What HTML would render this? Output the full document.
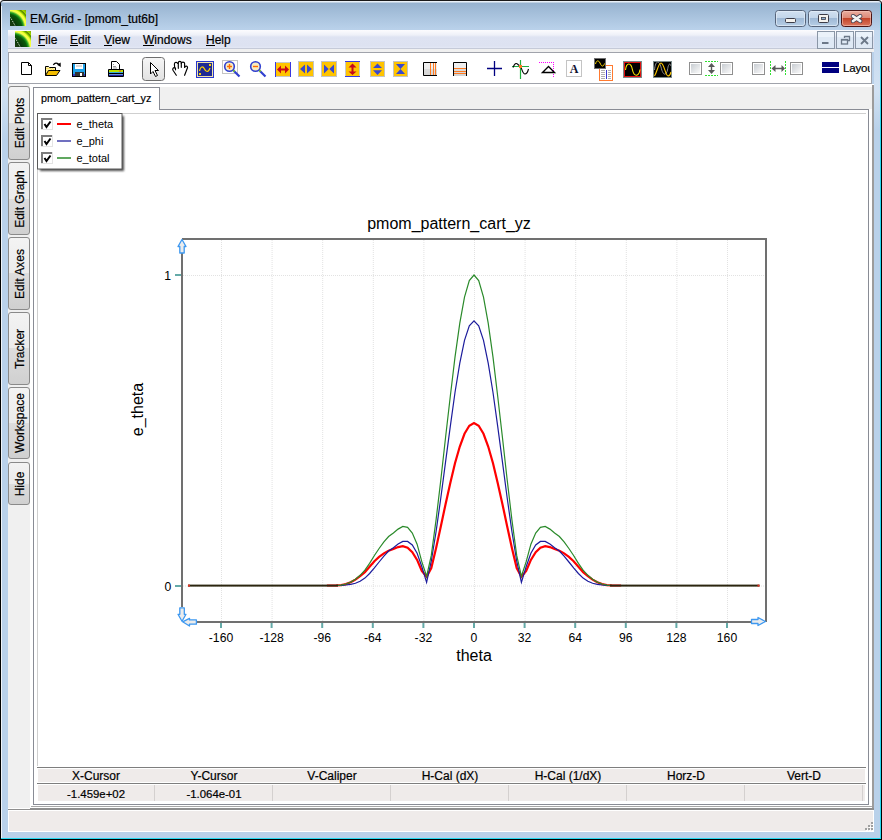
<!DOCTYPE html>
<html><head><meta charset="utf-8">
<style>
*{margin:0;padding:0;box-sizing:border-box}
html,body{width:882px;height:840px;overflow:hidden;background:#fff}
body{position:relative;font-family:"Liberation Sans",sans-serif;font-size:12px;color:#000;-webkit-text-stroke:0.2px #000}
.a{position:absolute}
#frame{left:0;top:0;width:882px;height:840px;background:#b9d1ea;border:1px solid #000;border-top-color:#1a1a1a;border-radius:4px 4px 0 0}
#titlegrad{left:1px;top:1px;width:880px;height:29px;background:linear-gradient(#e9f0f7 0px,#e9f0f7 1px,#97b3d0 2px,#a7c1dc 14px,#b9d1ea 28px);border-radius:4px 4px 0 0}
#menubar{left:8px;top:30px;width:866px;height:19px;background:linear-gradient(#fcfcfe 0px,#eef0f8 5px,#dee3f2 7px,#dde2f1 16px,#e4e8f5 18px);border-bottom:1px solid #c5cad8}
#gap{left:8px;top:49px;width:866px;height:3px;background:#f0f0f0}
#toolbar{left:8px;top:52px;width:864px;height:32px;background:#fff;border:1px solid #a0a3ab}
#content{left:8px;top:84px;width:866px;height:727px;background:#fff}
#sidepanel{left:8px;top:84px;width:22px;height:725px;background:#f0f0f0}
#status{left:8px;top:810px;width:866px;height:22px;background:#efebea;border:1px solid #fff}
.title{left:30px;top:12px;font-size:12px;color:#000;white-space:nowrap}
.menu{top:32px;font-size:12px;white-space:nowrap;line-height:16px}
.menu u{text-decoration:none;position:relative}.menu u::after{content:'';position:absolute;left:0;right:0;top:12px;height:1px;background:#000}
.stab{left:8px;width:22px;border:1px solid #8a8a8a;border-radius:3px;background:linear-gradient(180deg,#f3f3f3 0,#ebebeb 50%,#dddddd 50%,#d0d0d0 100%)}
.stab span{position:absolute;left:50%;top:50%;transform:translate(-50%,-50%) translate(1px,0) rotate(-90deg);white-space:nowrap;font-size:12px;line-height:14px}
.th{position:absolute;top:770px;height:13px;font-size:12px;line-height:13px;text-align:center}
.td{position:absolute;top:787px;height:14px;font-size:11.4px;line-height:14px;text-align:center}
</style></head><body>
<div class="a" id="frame"></div>
<div class="a" id="titlegrad"></div>
<div class="a" style="left:880px;top:4px;width:1px;height:835px;background:#27d8f0"></div>
<div class="a" style="left:1px;top:838px;width:880px;height:1px;background:#27d8f0"></div>
<div class="a title">EM.Grid - [pmom_tut6b]</div>
<div class="a" id="menubar"></div>
<div class="a" id="gap"></div>
<div class="a" id="toolbar"></div>
<div class="a" id="content"></div>
<div class="a" id="sidepanel"></div>
<div class="a" id="status"></div>
<div class="a menu" style="left:38px"><u>F</u>ile</div>
<div class="a menu" style="left:70px"><u>E</u>dit</div>
<div class="a menu" style="left:104px"><u>V</u>iew</div>
<div class="a menu" style="left:143px"><u>W</u>indows</div>
<div class="a menu" style="left:206px"><u>H</u>elp</div>
<div class="a" style="left:1px;top:6px;width:1px;height:832px;background:#eef3f8"></div>
<!-- mdi frame lines -->
<div class="a" style="left:872px;top:85px;width:2px;height:725px;background:#9c9c9c"></div>
<div class="a" style="left:8px;top:808px;width:866px;height:1px;background:#fff"></div>
<div class="a" style="left:30px;top:808px;width:844px;height:2px;background:#8e8e8e"></div>
<div class="a" style="left:8px;top:809px;width:22px;height:1px;background:#8e8e8e"></div>
<div class="a" style="left:31px;top:806px;width:841px;height:1px;background:#a8a8a8"></div>
<!-- side tabs -->
<div class="a stab" style="top:86px;height:74px"><span>Edit Plots</span></div>
<div class="a stab" style="top:162px;height:73px"><span>Edit Graph</span></div>
<div class="a stab" style="top:237px;height:73px"><span>Edit Axes</span></div>
<div class="a stab" style="top:312px;height:73px"><span>Tracker</span></div>
<div class="a stab" style="top:387px;height:72px"><span>Workspace</span></div>
<div class="a stab" style="top:462px;height:43px"><span>Hide</span></div>
<!-- tab control -->
<div class="a" style="left:159px;top:87px;width:713px;height:22px;background:#f0f0f0"></div>
<div class="a" style="left:33px;top:87px;width:127px;height:23px;background:#fff;border:1px solid #898c95;border-bottom:none"></div>
<div class="a" style="left:159px;top:109px;width:710px;height:1px;background:#898c95"></div>
<div class="a" style="left:33px;top:109px;width:1px;height:696px;background:#898c95"></div>
<div class="a" style="left:868px;top:109px;width:1px;height:696px;background:#898c95"></div>
<div class="a" style="left:33px;top:804px;width:836px;height:1px;background:#898c95"></div>
<div class="a" style="left:41px;top:92px;font-size:10.8px;line-height:13px;white-space:nowrap">pmom_pattern_cart_yz</div>
<!-- inner plot frame light -->
<div class="a" style="left:37px;top:113px;width:829px;height:1px;background:#cfcfcf"></div>
<div class="a" style="left:37px;top:113px;width:1px;height:653px;background:#cfcfcf"></div>
<!-- cursor table -->
<div class="a" style="left:37px;top:767px;width:829px;height:1px;background:#7e7e7e"></div>
<div class="a" style="left:38px;top:769px;width:827px;height:13px;background:#efebea"></div>
<div class="a" style="left:37px;top:783px;width:829px;height:1px;background:#7e7e7e"></div>
<div class="a" style="left:38px;top:785px;width:827px;height:16px;background:#efebea"></div>
<div class="a" style="left:154px;top:785px;width:1px;height:16px;background:#d4d0cf"></div>
<div class="a" style="left:272px;top:785px;width:1px;height:16px;background:#d4d0cf"></div>
<div class="a" style="left:390px;top:785px;width:1px;height:16px;background:#d4d0cf"></div>
<div class="a" style="left:508px;top:785px;width:1px;height:16px;background:#d4d0cf"></div>
<div class="a" style="left:626px;top:785px;width:1px;height:16px;background:#d4d0cf"></div>
<div class="a" style="left:744px;top:785px;width:1px;height:16px;background:#d4d0cf"></div>
<div class="a" style="left:862px;top:785px;width:1px;height:16px;background:#d4d0cf"></div>
<div class="th" style="left:37px;width:118px">X-Cursor</div>
<div class="th" style="left:155px;width:118px">Y-Cursor</div>
<div class="th" style="left:273px;width:118px">V-Caliper</div>
<div class="th" style="left:391px;width:118px">H-Cal (dX)</div>
<div class="th" style="left:509px;width:118px">H-Cal (1/dX)</div>
<div class="th" style="left:627px;width:118px">Horz-D</div>
<div class="th" style="left:745px;width:118px">Vert-D</div>
<div class="td" style="left:37px;width:118px">-1.459e+02</div>
<div class="td" style="left:155px;width:118px">-1.064e-01</div>
<div class="a" style="left:843px;top:61px;width:27px;height:16px;overflow:hidden;white-space:nowrap;font-size:11.5px;line-height:14px;letter-spacing:-0.2px">Layout</div>
<div class="a" style="left:2px;top:30px;width:6px;height:110px;background:linear-gradient(#c4d8ee,#cfe0f2 60%,#b9d1ea)"></div>
<div class="a" style="left:874px;top:30px;width:6px;height:100px;background:linear-gradient(#c4d8ee,#d2e2f3 60%,#b9d1ea)"></div>
<svg class="a" style="left:0;top:0" width="882" height="840" font-family="Liberation Sans, sans-serif">
<filter id="blr" x="-20%" y="-20%" width="140%" height="140%"><feGaussianBlur stdDeviation="1"/></filter><rect x="40" y="116" width="84" height="55" fill="#505050" filter="url(#blr)"/>
<rect x="37.5" y="113.5" width="84.5" height="55.5" fill="#fff" stroke="#5a5a5a" stroke-width="1"/>
<rect x="41" y="118" width="12" height="12" fill="#e4e4e4"/><rect x="41" y="118" width="11" height="11" fill="#7c7c7c"/><rect x="43" y="120" width="9" height="9" fill="#fff"/>
<path d="M44.5,124 L46.5,127 L50.5,121.5" stroke="#000" stroke-width="2" fill="none"/>
<rect x="57" y="123" width="14" height="2" fill="#ff0000"/>
<text x="76.5" y="127.6" font-size="11" fill="#000">e_theta</text>
<rect x="41" y="135" width="12" height="12" fill="#e4e4e4"/><rect x="41" y="135" width="11" height="11" fill="#7c7c7c"/><rect x="43" y="137" width="9" height="9" fill="#fff"/>
<path d="M44.5,141 L46.5,144 L50.5,138.5" stroke="#000" stroke-width="2" fill="none"/>
<rect x="57" y="140" width="14" height="2" fill="#7070c0"/>
<text x="76.5" y="144.6" font-size="11" fill="#000">e_phi</text>
<rect x="41" y="152" width="12" height="12" fill="#e4e4e4"/><rect x="41" y="152" width="11" height="11" fill="#7c7c7c"/><rect x="43" y="154" width="9" height="9" fill="#fff"/>
<path d="M44.5,158 L46.5,161 L50.5,155.5" stroke="#000" stroke-width="2" fill="none"/>
<rect x="57" y="157" width="14" height="2" fill="#60a860"/>
<text x="76.5" y="161.6" font-size="11" fill="#000">e_total</text>
<line x1="221.5" y1="240" x2="221.5" y2="621" stroke="#e2e2e2" stroke-width="1" stroke-dasharray="1,1"/>
<rect x="220.0" y="622" width="2" height="6" fill="#64aaa8"/>
<text x="221.0" y="641.5" font-size="12.2" text-anchor="middle" fill="#000">-160</text>
<line x1="272.1" y1="240" x2="272.1" y2="621" stroke="#e2e2e2" stroke-width="1" stroke-dasharray="1,1"/>
<rect x="270.6" y="622" width="2" height="6" fill="#64aaa8"/>
<text x="271.6" y="641.5" font-size="12.2" text-anchor="middle" fill="#000">-128</text>
<line x1="322.7" y1="240" x2="322.7" y2="621" stroke="#e2e2e2" stroke-width="1" stroke-dasharray="1,1"/>
<rect x="321.2" y="622" width="2" height="6" fill="#64aaa8"/>
<text x="322.2" y="641.5" font-size="12.2" text-anchor="middle" fill="#000">-96</text>
<line x1="373.3" y1="240" x2="373.3" y2="621" stroke="#e2e2e2" stroke-width="1" stroke-dasharray="1,1"/>
<rect x="371.8" y="622" width="2" height="6" fill="#64aaa8"/>
<text x="372.8" y="641.5" font-size="12.2" text-anchor="middle" fill="#000">-64</text>
<line x1="423.9" y1="240" x2="423.9" y2="621" stroke="#e2e2e2" stroke-width="1" stroke-dasharray="1,1"/>
<rect x="422.4" y="622" width="2" height="6" fill="#64aaa8"/>
<text x="423.4" y="641.5" font-size="12.2" text-anchor="middle" fill="#000">-32</text>
<line x1="474.5" y1="240" x2="474.5" y2="621" stroke="#e2e2e2" stroke-width="1" stroke-dasharray="1,1"/>
<rect x="473.0" y="622" width="2" height="6" fill="#64aaa8"/>
<text x="474.0" y="641.5" font-size="12.2" text-anchor="middle" fill="#000">0</text>
<line x1="525.1" y1="240" x2="525.1" y2="621" stroke="#e2e2e2" stroke-width="1" stroke-dasharray="1,1"/>
<rect x="523.6" y="622" width="2" height="6" fill="#64aaa8"/>
<text x="524.6" y="641.5" font-size="12.2" text-anchor="middle" fill="#000">32</text>
<line x1="575.7" y1="240" x2="575.7" y2="621" stroke="#e2e2e2" stroke-width="1" stroke-dasharray="1,1"/>
<rect x="574.2" y="622" width="2" height="6" fill="#64aaa8"/>
<text x="575.2" y="641.5" font-size="12.2" text-anchor="middle" fill="#000">64</text>
<line x1="626.3" y1="240" x2="626.3" y2="621" stroke="#e2e2e2" stroke-width="1" stroke-dasharray="1,1"/>
<rect x="624.8" y="622" width="2" height="6" fill="#64aaa8"/>
<text x="625.8" y="641.5" font-size="12.2" text-anchor="middle" fill="#000">96</text>
<line x1="676.9" y1="240" x2="676.9" y2="621" stroke="#e2e2e2" stroke-width="1" stroke-dasharray="1,1"/>
<rect x="675.4" y="622" width="2" height="6" fill="#64aaa8"/>
<text x="676.4" y="641.5" font-size="12.2" text-anchor="middle" fill="#000">128</text>
<line x1="727.5" y1="240" x2="727.5" y2="621" stroke="#e2e2e2" stroke-width="1" stroke-dasharray="1,1"/>
<rect x="726.0" y="622" width="2" height="6" fill="#64aaa8"/>
<text x="727.0" y="641.5" font-size="12.2" text-anchor="middle" fill="#000">160</text>
<line x1="183" y1="275.5" x2="765" y2="275.5" stroke="#e2e2e2" stroke-width="1" stroke-dasharray="1,1"/>
<line x1="183" y1="586" x2="765" y2="586" stroke="#e2e2e2" stroke-width="1" stroke-dasharray="1,1"/>
<rect x="175" y="274" width="6" height="2" fill="#64aaa8"/><rect x="175" y="585" width="6" height="2" fill="#64aaa8"/>
<text x="171" y="279.8" font-size="12.2" text-anchor="end">1</text><text x="171.3" y="590.6" font-size="12.2" text-anchor="end">0</text>
<path d="M182,239 L766,239 L766,622 M182,253 L182,607 M196,622 L752,622" stroke="#707070" stroke-width="2" fill="none" stroke-linecap="butt"/>
<text x="449" y="228.5" font-size="16" text-anchor="middle">pmom_pattern_cart_yz</text>
<text x="474" y="660.7" font-size="16" text-anchor="middle">theta</text>
<text transform="translate(143.3,409.5) rotate(-90)" font-size="16" text-anchor="middle">e_theta</text>
<path d="M182,239.5 L186,246.5 L184.2,246.5 L184.2,253 L179.8,253 L179.8,246.5 L178,246.5 Z" fill="#ececec" stroke="#3d98f0" stroke-width="1.3" stroke-linejoin="round"/>
<path d="M182,621.3 L178,614.3 L179.8,614.3 L179.8,607.8 L184.3,607.8 L184.3,614.3 L186,614.3 Z" fill="#ececec" stroke="#3d98f0" stroke-width="1.3" stroke-linejoin="round"/>
<path d="M182.6,621.8 L189.5,618.4 L189.5,619.9 L196.4,619.9 L196.4,624.2 L189.5,624.2 L189.5,626 Z" fill="#ececec" stroke="#3d98f0" stroke-width="1.3" stroke-linejoin="round"/>
<path d="M765.5,621.5 L758,617.5 L758,619.5 L751.5,619.5 L751.5,623.5 L758,623.5 L758,625.5 Z" fill="#ececec" stroke="#3d98f0" stroke-width="1.3" stroke-linejoin="round"/>
<path d="M326.9,585.5 L331.7,585.5 L336.4,585.4 L341.2,585.1 L345.9,584.1 L350.7,582.3 L355.4,579.6 L360.1,576.2 L364.9,572.1 L369.6,566.8 L374.4,561.3 L379.1,556.9 L383.9,553.4 L388.6,550.8 L393.4,549.0 L398.1,547.1 L402.8,546.2 L407.6,547.7 L412.3,552.2 L417.1,559.9 L421.8,571.0 L426.6,576.8 L431.3,568.0 L436.1,548.0 L440.8,526.5 L445.5,504.4 L450.3,482.9 L455.0,463.2 L459.8,446.5 L464.5,433.8 L469.3,425.8 L474.0,423.1 L478.7,425.8 L483.5,433.8 L488.2,446.5 L493.0,463.2 L497.7,482.9 L502.5,504.4 L507.2,526.5 L511.9,548.0 L516.7,568.0 L521.4,576.8 L526.2,571.0 L530.9,559.9 L535.7,552.2 L540.4,547.7 L545.2,546.2 L549.9,547.1 L554.6,549.0 L559.4,550.8 L564.1,553.4 L568.9,556.9 L573.6,561.3 L578.4,566.8 L583.1,572.1 L587.9,576.2 L592.6,579.6 L597.3,582.3 L602.1,584.1 L606.8,585.1 L611.6,585.4 L616.3,585.5 L621.1,585.5" stroke="#ff0000" stroke-width="2.2" fill="none" stroke-linejoin="miter"/>
<path d="M326.9,585.5 L331.7,585.5 L336.4,585.5 L341.2,585.4 L345.9,585.0 L350.7,584.4 L355.4,583.3 L360.1,581.2 L364.9,578.1 L369.6,573.5 L374.4,567.9 L379.1,562.0 L383.9,556.1 L388.6,551.0 L393.4,547.7 L398.1,544.1 L402.8,541.4 L407.6,541.4 L412.3,545.0 L417.1,553.2 L421.8,566.5 L426.6,582.4 L431.3,561.0 L436.1,531.5 L440.8,498.0 L445.5,462.3 L450.3,426.4 L455.0,392.5 L459.8,363.1 L464.5,340.3 L469.3,325.8 L474.0,320.9 L478.7,325.8 L483.5,340.3 L488.2,363.1 L493.0,392.5 L497.7,426.4 L502.5,462.3 L507.2,498.0 L511.9,531.5 L516.7,561.0 L521.4,582.4 L526.2,566.5 L530.9,553.2 L535.7,545.0 L540.4,541.4 L545.2,541.4 L549.9,544.1 L554.6,547.7 L559.4,551.0 L564.1,556.1 L568.9,562.0 L573.6,567.9 L578.4,573.5 L583.1,578.1 L587.9,581.2 L592.6,583.3 L597.3,584.4 L602.1,585.0 L606.8,585.4 L611.6,585.5 L616.3,585.5 L621.1,585.5" stroke="#1c1c9c" stroke-width="1.2" fill="none" stroke-linejoin="miter"/>
<path d="M326.9,585.5 L331.7,585.5 L336.4,585.4 L341.2,585.1 L345.9,584.0 L350.7,582.1 L355.4,579.2 L360.1,575.3 L364.9,570.2 L369.6,563.3 L374.4,555.5 L379.1,548.5 L383.9,541.9 L388.6,536.5 L393.4,533.0 L398.1,529.1 L402.8,526.5 L407.6,527.4 L412.3,533.1 L417.1,544.2 L421.8,561.6 L426.6,576.3 L431.3,555.4 L436.1,519.7 L440.8,480.0 L445.5,438.0 L450.3,396.2 L455.0,357.1 L459.8,323.2 L464.5,297.1 L469.3,280.6 L474.0,275.0 L478.7,280.6 L483.5,297.1 L488.2,323.2 L493.0,357.1 L497.7,396.2 L502.5,438.0 L507.2,480.0 L511.9,519.7 L516.7,555.4 L521.4,576.3 L526.2,561.6 L530.9,544.2 L535.7,533.1 L540.4,527.4 L545.2,526.5 L549.9,529.1 L554.6,533.0 L559.4,536.5 L564.1,541.9 L568.9,548.5 L573.6,555.5 L578.4,563.3 L583.1,570.2 L587.9,575.3 L592.6,579.2 L597.3,582.1 L602.1,584.0 L606.8,585.1 L611.6,585.4 L616.3,585.5 L621.1,585.5" stroke="#2a8a2a" stroke-width="1.2" fill="none" stroke-linejoin="miter"/>
<rect x="188" y="584.6" width="150" height="2" fill="#2c2610"/><rect x="610" y="584.6" width="149.5" height="2" fill="#2c2610"/>
<rect x="188" y="584.6" width="2" height="2" fill="#e03020"/><rect x="757.5" y="584.6" width="2" height="2" fill="#e03020"/>
<defs>
<radialGradient id="emg" gradientUnits="userSpaceOnUse" cx="8" cy="28" r="25">
<stop offset="0" stop-color="#2a3a18"/><stop offset="0.35" stop-color="#0a3a0a"/><stop offset="0.55" stop-color="#0a5a0a"/><stop offset="0.62" stop-color="#20a020"/><stop offset="0.7" stop-color="#f8ff50"/><stop offset="0.77" stop-color="#f0ff30"/><stop offset="0.82" stop-color="#90d000"/><stop offset="0.87" stop-color="#507a00"/><stop offset="0.91" stop-color="#a0d800"/><stop offset="1" stop-color="#80b000"/>
</radialGradient>
<linearGradient id="minb" x1="0" y1="0" x2="0" y2="1"><stop offset="0" stop-color="#d2e1f1"/><stop offset="0.45" stop-color="#c3d6ea"/><stop offset="0.5" stop-color="#9fb9d6"/><stop offset="1" stop-color="#b8cfe6"/></linearGradient>
<linearGradient id="clsb" x1="0" y1="0" x2="0" y2="1"><stop offset="0" stop-color="#eab0a2"/><stop offset="0.45" stop-color="#de8a78"/><stop offset="0.5" stop-color="#c4452a"/><stop offset="1" stop-color="#dc7a62"/></linearGradient>
<linearGradient id="pbtn" x1="0" y1="0" x2="0" y2="1"><stop offset="0" stop-color="#f6f6f6"/><stop offset="1" stop-color="#e2e2e2"/></linearGradient>
<linearGradient id="chk" x1="0" y1="0" x2="1" y2="1"><stop offset="0" stop-color="#c8cdd2"/><stop offset="1" stop-color="#fafafa"/></linearGradient>
<linearGradient id="lg7" x1="0" y1="0" x2="0" y2="1"><stop offset="0" stop-color="#f2f2f2"/><stop offset="0.5" stop-color="#ececec"/><stop offset="0.5" stop-color="#dcdcdc"/><stop offset="1" stop-color="#d4d4d4"/></linearGradient>
</defs>
<!-- app icons -->
<g id="emicon"><rect x="10" y="10" width="16" height="16" fill="url(#emg)"/>
<path d="M10.5,17.5 L15,25.5" stroke="#e8f0e0" stroke-width="1" stroke-dasharray="1,1"/></g>
<use href="#emicon" x="5" y="21"/>
<!-- title buttons -->
<rect x="775.5" y="10.5" width="30" height="16" rx="3" fill="url(#minb)" stroke="#56647a"/>
<rect x="776.5" y="11.5" width="28" height="14" rx="2" fill="none" stroke="#e6eef8" stroke-opacity="0.7"/>
<rect x="785.5" y="18.5" width="10" height="4" rx="1" fill="#f4f2ee" stroke="#3c3c48"/>
<rect x="808.5" y="10.5" width="30" height="16" rx="3" fill="url(#minb)" stroke="#56647a"/>
<rect x="809.5" y="11.5" width="28" height="14" rx="2" fill="none" stroke="#e6eef8" stroke-opacity="0.7"/>
<rect x="818.5" y="14.5" width="10" height="8" rx="1" fill="#f4f2ee" stroke="#3c3c48"/>
<rect x="821.5" y="17.5" width="4" height="2" fill="#8fb0d0" stroke="#3c3c48" stroke-width="0.8"/>
<rect x="841.5" y="10.5" width="30" height="16" rx="3" fill="url(#clsb)" stroke="#4a1414"/>
<rect x="842.5" y="11.5" width="28" height="14" rx="2" fill="none" stroke="#f6c8bc" stroke-opacity="0.6"/>
<path d="M852.9,16.1 L860.3,21.1 M860.3,16.1 L852.9,21.1" stroke="#3a3a4a" stroke-width="4.2" stroke-linecap="round"/>
<path d="M852.9,16.1 L860.3,21.1 M860.3,16.1 L852.9,21.1" stroke="#f2f2f2" stroke-width="2.6" stroke-linecap="round"/>
<!-- mdi buttons -->
<rect x="817.5" y="31.5" width="17" height="17" fill="#dfe9f5" stroke="#8a96a6"/>
<rect x="818" y="32" width="16" height="5" fill="#ebf2fa"/>
<rect x="822" y="42" width="6.5" height="2" fill="#6c7888"/>
<rect x="836.5" y="31.5" width="17" height="17" fill="#dfe9f5" stroke="#8a96a6"/>
<rect x="837" y="32" width="16" height="5" fill="#ebf2fa"/>
<path d="M844.5,38 L844.5,36.5 L849.5,36.5 L849.5,40.5 L847.5,40.5" stroke="#6c7888" stroke-width="1.3" fill="none"/>
<rect x="841.5" y="39.5" width="6" height="4.5" fill="none" stroke="#6c7888" stroke-width="1.3"/>
<rect x="841" y="39" width="7" height="1.6" fill="#6c7888"/>
<rect x="855.5" y="31.5" width="17" height="17" fill="#dfe9f5" stroke="#8a96a6"/>
<rect x="856" y="32" width="16" height="5" fill="#ebf2fa"/>
<path d="M861,37 L868,44 M868,37 L861,44" stroke="#6c7888" stroke-width="1.8"/>
<!-- toolbar: new -->
<path d="M21.5,62.5 L28.5,62.5 L31.5,65.5 L31.5,74.5 L21.5,74.5 Z" fill="#fff" stroke="#000"/>
<path d="M28.5,62.5 L28.5,65.5 L31.5,65.5" fill="none" stroke="#000"/>
<!-- open -->
<path d="M45.5,75.5 L45.5,66.5 L48.5,66.5 L49.5,67.5 L55.5,67.5 L55.5,70.5" fill="#fff2a8" stroke="#000"/>
<path d="M46.5,68 L47.5,69 M48.5,68 L49.5,69 M50.5,68.5 L51.5,69.5 M52.5,68.5 L53.5,69.5 M46.5,70 L47.5,71 M46.5,72 L47.5,73" stroke="#f0c000" stroke-width="0.8"/>
<path d="M45.5,75.5 L48.5,70.5 L60,70.5 L56.5,75.5 Z" fill="#f2bc00" stroke="#000"/>
<path d="M53.3,64.8 Q55.8,61.6 58.6,64.3" fill="none" stroke="#000" stroke-width="1.3"/>
<path d="M57,64.8 L60.8,67 L60.6,62.6 Z" fill="#000"/>
<!-- save -->
<rect x="72.5" y="63.5" width="13" height="13" fill="#1ea2ea" stroke="#000"/>
<rect x="75" y="64" width="8" height="5" fill="#fff"/><rect x="76" y="65" width="6" height="2" fill="#d8d8d8"/>
<rect x="75" y="72" width="9" height="4" fill="#333"/><rect x="80" y="73" width="2" height="3" fill="#fff"/>
<rect x="73" y="74" width="2" height="2" fill="#3838c8"/><rect x="84" y="74" width="1" height="2" fill="#3838c8"/>
<!-- print -->
<path d="M111.5,61.5 L116.5,61.5 L119.5,64.5 L119.5,69.5 L111.5,69.5 Z" fill="#fff" stroke="#000"/>
<path d="M113,64.5 L114,64.5 M113,66.5 L116,66.5 M113,68 L117,68" stroke="#999"/>
<rect x="108" y="69" width="16" height="8" rx="1" fill="#000"/>
<rect x="109" y="70" width="14" height="2" fill="#b8e000"/><rect x="119" y="70.5" width="2" height="1" fill="#ff3030"/>
<rect x="109" y="72" width="14" height="1" fill="#30a8e0"/>
<rect x="109" y="74" width="14" height="1" fill="#6890d8"/>
<rect x="109" y="75" width="14" height="1" fill="#2020a0"/>
<!-- pressed pointer button -->
<rect x="142.5" y="57.5" width="22" height="23" rx="3" fill="url(#pbtn)" stroke="#6e6e6e"/>
<path d="M150.5,62.5 L150.5,74 L153,71.5 L155.5,76.5 L157.5,75.5 L155,70.5 L158.5,70.5 Z" fill="#fff" stroke="#000" stroke-linejoin="round"/>
<!-- hand -->
<g fill="none" stroke="#000" stroke-width="1.15" stroke-linecap="round" stroke-linejoin="round">
<path d="M176.3,75.3 L173,70.3 C172.3,69 173,67.6 174.5,67.6 L175.5,68 L175.5,69.8"/>
<path d="M174.6,67 L174.4,64 C174.4,62 177.2,61.8 177.8,63.5"/>
<path d="M178.3,68.3 L178.3,63 C178.3,60.8 181.3,60.8 181.3,63 L181.3,67.3"/>
<path d="M181.3,63.5 C181.3,61.6 184.6,61.6 184.6,63.5 L184.6,67.3"/>
<path d="M184.7,67.5 C184.9,65.6 187.9,65.8 187.5,67.8 L184.6,75.3"/>
</g>
<!-- wave icon -->
<rect x="196.5" y="61.5" width="17" height="16" fill="#f0e4a8" stroke="#2838d0"/>
<rect x="198" y="63" width="14" height="13" fill="#1e2a94"/>
<path d="M199.5,71 C200.5,66 203,66 204.5,69 C206,72.5 208.5,72.5 210,68" stroke="#ffd200" stroke-width="1.2" fill="none"/>
<rect x="209" y="64" width="2" height="2" fill="#ffd200"/><rect x="199" y="73" width="2" height="2" fill="#ffd200"/>
<!-- zoom in -->
<rect x="222.5" y="60.5" width="15" height="13" fill="#fff" stroke="#c4c4c4"/>
<path d="M233.5,70.5 L239.5,76.5" stroke="#3040d0" stroke-width="2.2"/>
<path d="M233,70 L234.5,71.5" stroke="#80d020" stroke-width="2"/>
<circle cx="229.5" cy="66.5" r="4.8" fill="#f8ecc0" stroke="#3040d0" stroke-width="1.6"/>
<path d="M227,66.5 L232,66.5 M229.5,64 L229.5,69" stroke="#ff6a00" stroke-width="1.4"/>
<!-- zoom out -->
<path d="M259.5,70.5 L265.5,76.5" stroke="#3040d0" stroke-width="2.2"/>
<path d="M259,70 L260.5,71.5" stroke="#80d020" stroke-width="2"/>
<circle cx="255.5" cy="66.5" r="4.8" fill="#f8ecc0" stroke="#3040d0" stroke-width="1.6"/>
<path d="M253,66.5 L258,66.5" stroke="#ff6a00" stroke-width="1.4"/>
<!-- yellow icons -->
<rect x="275" y="62" width="16" height="15" fill="#ffc400"/>
<path d="M275,62.5 L291,62.5 M275,76.5 L291,76.5" stroke="#c8c8c8"/>
<path d="M275.5,62 L275.5,77 M290.5,62 L290.5,77" stroke="#3838e0"/>
<path d="M277,69.5 L281,65.5 L281,68.5 L285,68.5 L285,65.5 L289,69.5 L285,73.5 L285,70.5 L281,70.5 L281,73.5 Z" fill="#c80818"/>
<rect x="298.5" y="61.5" width="15" height="15" fill="#ffc400" stroke="#c4c4c4"/>
<path d="M300,69 L305,64.5 L305,73.5 Z M312,69 L307,64.5 L307,73.5 Z" fill="#3848d0"/>
<rect x="321.5" y="61.5" width="15" height="15" fill="#ffc400" stroke="#c4c4c4"/>
<path d="M324,64.5 L328.7,69 L324,73.5 Z M334,64.5 L329.3,69 L334,73.5 Z" fill="#3848d0"/>
<rect x="345" y="61" width="15" height="16" fill="#ffc400"/>
<path d="M345.5,61 L345.5,77 M359.5,61 L359.5,77" stroke="#c8c8c8"/>
<path d="M345,61.5 L360,61.5 M345,76.5 L360,76.5" stroke="#3838e0"/>
<path d="M352.5,63.5 L356.5,67.5 L353.5,67.5 L353.5,71.5 L356.5,71.5 L352.5,75 L348.5,71.5 L351.5,71.5 L351.5,67.5 L348.5,67.5 Z" fill="#c80818"/>
<rect x="370.5" y="61.5" width="14" height="15" fill="#ffc400" stroke="#c4c4c4"/>
<path d="M377.5,63.5 L382,68 L373,68 Z M377.5,75 L382,70.3 L373,70.3 Z" fill="#3848d0"/>
<rect x="393.5" y="61.5" width="14" height="15" fill="#ffc400" stroke="#c4c4c4"/>
<path d="M396,64 L405,64 L400.5,69 Z M396,74 L405,74 L400.5,69 Z" fill="#3848d0"/>
<!-- lines icons -->
<rect x="423" y="62" width="14" height="14" fill="url(#lg7)"/>
<path d="M437,62.5 L423.5,62.5 L423.5,75.5 L437,75.5" stroke="#000" fill="none"/>
<path d="M430.5,63 L430.5,75 M433.5,63 L433.5,75 M435.5,63 L435.5,75" stroke="#ff7a20"/>
<rect x="453" y="62" width="14" height="14" fill="url(#lg7)"/>
<path d="M453.5,76 L453.5,62.5 L466.5,62.5 L466.5,76" stroke="#000" fill="none"/>
<path d="M454,68.5 L466,68.5 M454,71.5 L466,71.5 M454,73.5 L466,73.5" stroke="#ff7a20"/>
<!-- cross -->
<path d="M487,68.5 L502,68.5 M494.5,61 L494.5,76" stroke="#000080" stroke-width="1.3"/>
<!-- sine cross -->
<path d="M512,66.5 L529,66.5 M520.5,60 L520.5,79" stroke="#20b040" stroke-width="1.2"/>
<path d="M513,67.5 C514.5,63.5 516,62.5 518,64.5 L520.5,66.5 C522,68.5 522.5,74 525,74 C527,74 528,71 528.5,69" stroke="#000" stroke-width="1.1" fill="none"/>
<rect x="519" y="65" width="3" height="3" fill="#ff7a20"/>
<!-- triangle -->
<path d="M539,62.5 L554,62.5 M553.5,62 L553.5,77" stroke="#ff00ff" stroke-dasharray="1,1"/>
<path d="M542.5,72.5 L548.5,66.5 L554.5,72.5 Z" fill="#fff" stroke="#000" stroke-width="1.4"/>
<!-- A -->
<rect x="566.5" y="60.5" width="15" height="16" fill="#fff" stroke="#c4c4c4"/>
<text x="574" y="73" font-family="Liberation Serif" font-weight="bold" font-size="12" text-anchor="middle" fill="#101030">A</text>
<!-- scope+doc -->
<rect x="599.5" y="65.5" width="13" height="15" fill="#fff" stroke="#ff7a30"/>
<path d="M601,70.5 L605,70.5 M601,72.5 L605,72.5 M601,74.5 L605,74.5 M601,76.5 L605,76.5 M601,78.5 L605,78.5 M608,70.5 L611,70.5 M608,72.5 L611,72.5 M608,74.5 L611,74.5 M608,76.5 L611,76.5 M608,78.5 L611,78.5" stroke="#b0b0b0"/>
<path d="M606.5,70 L606.5,79" stroke="#3838d0" stroke-width="1"/>
<rect x="594.5" y="58.5" width="11" height="10" fill="#000" stroke="#707070"/>
<path d="M595.5,64 C596.5,60 598.5,60 600,63 C601.5,67 603.5,67 604.5,63.5" stroke="#ffd800" stroke-width="1" fill="none"/>
<!-- scope red -->
<rect x="623.5" y="61.5" width="18" height="16" fill="#000" stroke="#7a8a8a"/>
<rect x="624.5" y="62.5" width="16" height="14" fill="#000" stroke="#e01010"/>
<path d="M625.5,70 C626.5,62 631,62 632.5,70 C634,77 639,77 640,69.5" stroke="#ffe800" stroke-width="1.1" fill="none"/>
<!-- scope 2 -->
<rect x="653.5" y="61.5" width="18" height="16" fill="#000" stroke="#7a8a8a"/>
<path d="M654.5,70 C655.5,60 659,60 661,67 C663,76 666,76 667.5,70 C668.5,63 670,63 671,66" stroke="#909090" stroke-width="1" fill="none"/>
<path d="M654.5,76 C657,72 658.5,63 661,63 C664,63 665.5,76 668,76 C669.5,76 670.5,74 671,72" stroke="#ffc800" stroke-width="1.1" fill="none"/>
<!-- checkboxes + arrows -->
<g id="cb"><rect x="689.5" y="62.5" width="12" height="12" fill="#fff" stroke="#8f8f8f"/><rect x="691" y="64" width="9" height="9" fill="url(#chk)"/></g>
<use href="#cb" x="31"/><use href="#cb" x="63"/><use href="#cb" x="101"/>
<path d="M705,61.5 L718,61.5 M705,75.5 L718,75.5" stroke="#30e030" stroke-dasharray="2,1"/>
<path d="M711.5,63 L715,67 L712.2,67 L712.2,70 L715,70 L711.5,74 L708,70 L710.8,70 L710.8,67 L708,67 Z" fill="#5a5a5a"/>
<path d="M770.5,61 L770.5,76 M785.5,61 L785.5,76" stroke="#30e030" stroke-dasharray="2,1"/>
<path d="M771.5,68.5 L775.5,65 L775.5,67.8 L781.5,67.8 L781.5,65 L785,68.5 L781.5,72 L781.5,69.2 L775.5,69.2 L775.5,72 Z" fill="#5a5a5a"/>
<!-- layout -->
<rect x="822" y="62" width="17" height="5" fill="#000080"/><rect x="822" y="68" width="17" height="5" fill="#000080"/>
<!-- resize grip -->
<g fill="#fff"><rect x="872" y="823" width="2" height="2"/><rect x="869" y="826" width="2" height="2"/><rect x="872" y="826" width="2" height="2"/><rect x="866" y="829" width="2" height="2"/><rect x="869" y="829" width="2" height="2"/><rect x="872" y="829" width="2" height="2"/></g>
<g fill="#a0a0a0"><rect x="871" y="822" width="2" height="2"/><rect x="868" y="825" width="2" height="2"/><rect x="871" y="825" width="2" height="2"/><rect x="865" y="828" width="2" height="2"/><rect x="868" y="828" width="2" height="2"/><rect x="871" y="828" width="2" height="2"/></g>

</svg>
</body></html>
